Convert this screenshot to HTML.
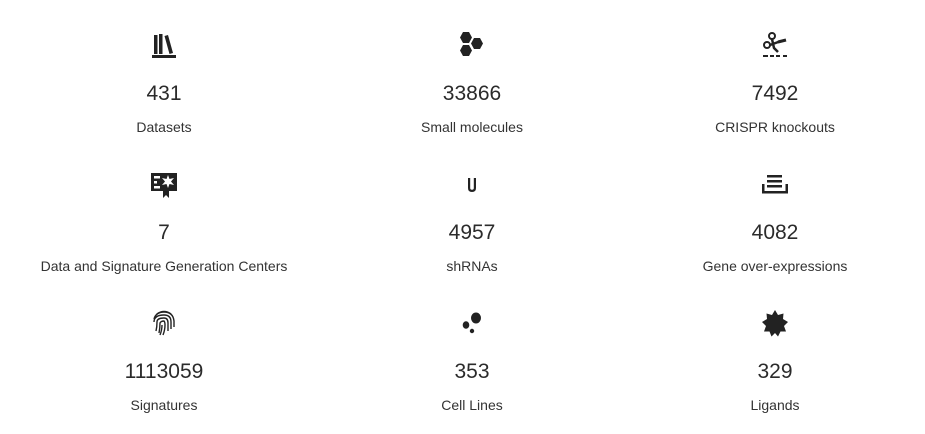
<!DOCTYPE html>
<html><head><meta charset="utf-8"><style>
body{margin:0;width:925px;height:434px;background:#fff;font-family:"Liberation Sans",sans-serif;color:#2b2b2b;position:relative;overflow:hidden}
.c{position:absolute;width:300px;text-align:center}
.c svg{position:absolute;left:136px;top:0;width:28px;height:28px}
.n{position:absolute;top:51px;width:100%;font-size:21px;line-height:24px}
.l{position:absolute;top:88px;width:100%;font-size:14px;line-height:16px;color:#333}
</style></head><body>

<div class="c" style="left:14px;top:31px">
<svg viewBox="0 0 28 28"><rect x="2" y="24" width="24" height="3" fill="#222"/><rect x="4" y="4" width="3.5" height="19" fill="#222"/><rect x="9" y="3" width="3.5" height="20" fill="#222"/><path d="M14.5 5 L18 4 L23 22 L19.5 23 Z" fill="#222"/></svg>
<div class="n">431</div><div class="l">Datasets</div></div>

<div class="c" style="left:322px;top:31px">
<svg viewBox="0 0 28 28"><path d="M5 1 L11 1 L14 6.5 L11 12 L5 12 L2 6.5Z M16 7 L22 7 L25 12.5 L22 18 L16 18 L13 12.5Z M5 14 L11 14 L14 19.5 L11 25 L5 25 L2 19.5Z" fill="#222"/></svg>
<div class="n">33866</div><div class="l">Small molecules</div></div>

<div class="c" style="left:625px;top:31px">
<svg viewBox="0 0 28 28" fill="none" stroke="#222"><circle cx="11" cy="5" r="3" stroke-width="2"/><circle cx="6" cy="14" r="3" stroke-width="2"/><path d="M11 8 L13 17 L17 21 M9 14 L20 10" stroke-width="2.5"/><path d="M17 11 L25 9" stroke-width="3"/><path d="M2 25 H7 M9 25 H13 M15 25 H19 M22 25 H26" stroke-width="2"/></svg>
<div class="n">7492</div><div class="l">CRISPR knockouts</div></div>

<div class="c" style="left:14px;top:170px">
<svg viewBox="0 0 28 28"><path d="M1 3 H27 V21 H19 V28 L16 25 L13 28 V21 H1Z" fill="#222"/><rect x="4" y="6" width="6" height="2.5" fill="#fff"/><rect x="4" y="11" width="3" height="2.5" fill="#fff"/><rect x="4" y="16" width="6" height="2.5" fill="#fff"/><path d="M18 5 L19.5 9 L24 8 L21 11.5 L24 15 L19.5 14 L18 18 L16.5 14 L12 15 L15 11.5 L12 8 L16.5 9Z" fill="#fff"/></svg>
<div class="n">7</div><div class="l">Data and Signature Generation Centers</div></div>

<div class="c" style="left:322px;top:170px">
<svg viewBox="0 0 28 28"><path d="M10 8 V18 Q10 22 14 22 Q18 22 18 18 V8 H15.8 V18 Q15.8 19.8 14 19.8 Q12.2 19.8 12.2 18 V8Z" fill="#222"/></svg>
<div class="n">4957</div><div class="l">shRNAs</div></div>

<div class="c" style="left:625px;top:170px">
<svg viewBox="0 0 28 28" fill="#222"><rect x="6" y="5" width="15" height="2.5"/><rect x="6" y="10" width="15" height="2.5"/><rect x="6" y="15" width="15" height="2.5"/><path d="M1 14 H3.5 V21 H24.5 V14 H27 V23.5 H1Z"/></svg>
<div class="n">4082</div><div class="l">Gene over-expressions</div></div>

<div class="c" style="left:14px;top:309px">
<svg viewBox="0 0 28 28" fill="none" stroke="#222" stroke-width="1.4"><path d="M7 5 Q14 0 21 5"/><path d="M4 10 Q6 3 14 3 Q23 3 24 12 V18"/><path d="M4 13 Q4 6 14 6 Q21 6 21 13 V20"/><path d="M6 22 Q7 18 7 13 Q7 9 14 9 Q18 9 18 14 V22"/><path d="M9 24 Q10 19 10 14 Q11 12 14 12 Q15 13 15 16 Q15 21 13 26"/><path d="M12 16 Q12 21 10 26"/></svg>
<div class="n">1113059</div><div class="l">Signatures</div></div>

<div class="c" style="left:322px;top:309px">
<svg viewBox="0 0 28 28" fill="#222"><ellipse cx="18" cy="9" rx="5" ry="5.5"/><ellipse cx="8" cy="16" rx="3.3" ry="3.7"/><circle cx="14" cy="22" r="2.2"/></svg>
<div class="n">353</div><div class="l">Cell Lines</div></div>

<div class="c" style="left:625px;top:309px">
<svg viewBox="0 0 28 28"><path d="M14 1 L17 6 L22.5 4.5 L22 10 L27 13 L23 17 L25 22.5 L19.5 22.5 L17 27.5 L14 24 L10.5 27.5 L8.5 22.5 L3 22.5 L5 17 L1 13 L6 10 L5.5 4.5 L11 6Z" fill="#222"/></svg>
<div class="n">329</div><div class="l">Ligands</div></div>

</body></html>
